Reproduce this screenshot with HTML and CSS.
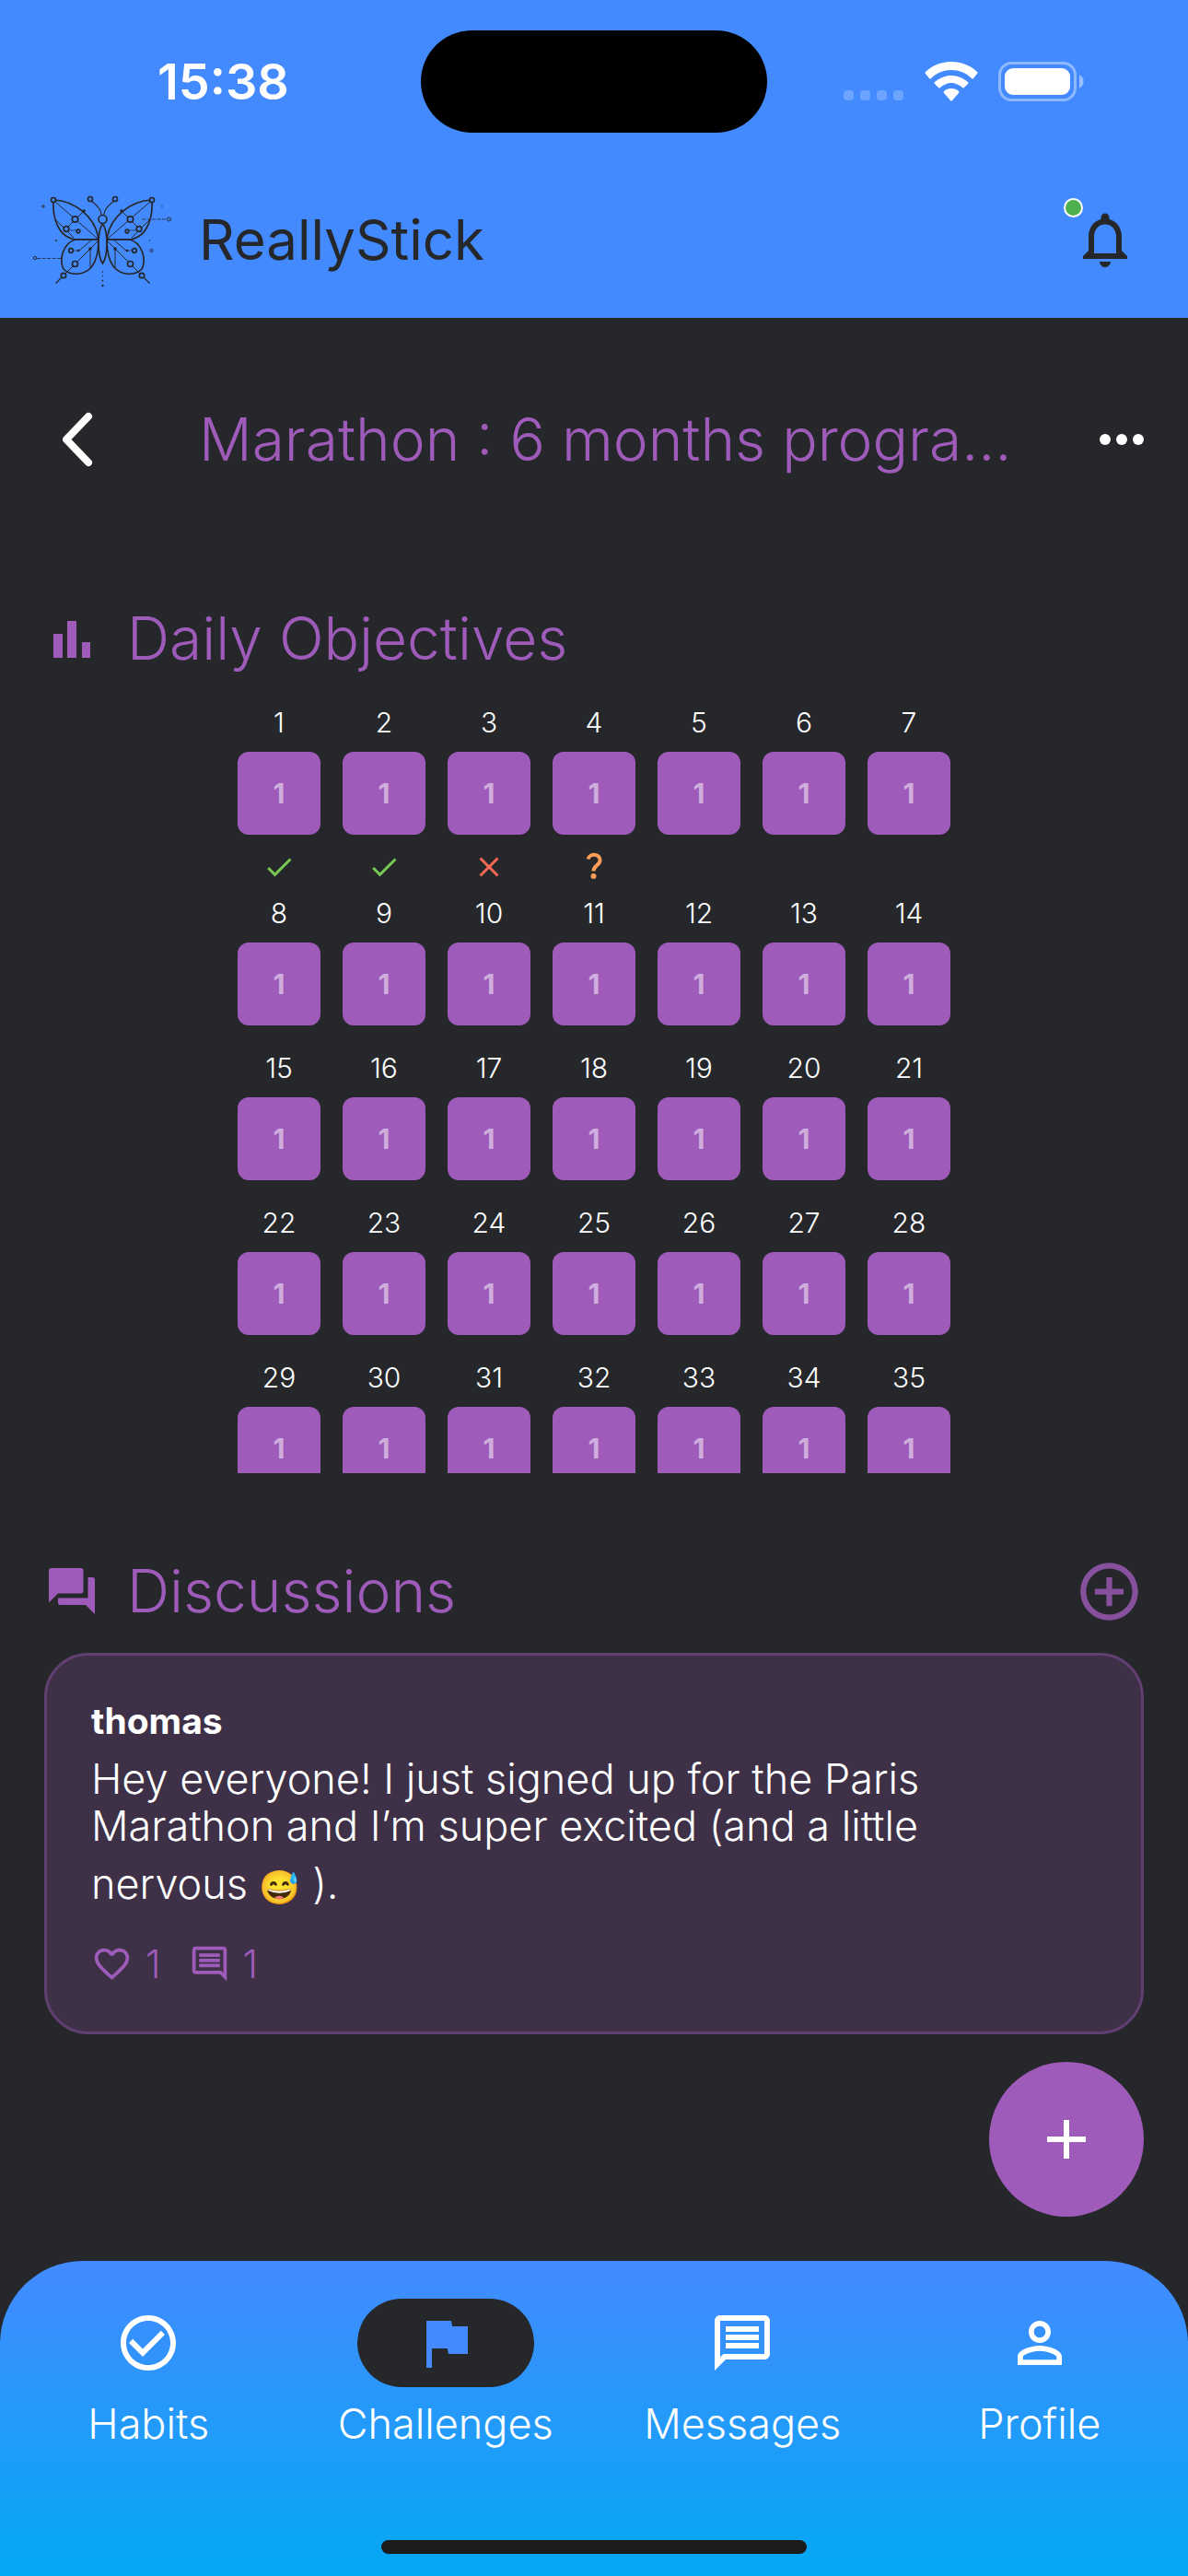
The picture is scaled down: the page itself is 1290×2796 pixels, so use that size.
FILE: index.html
```html
<!DOCTYPE html>
<html lang="en">
<head>
<meta charset="utf-8">
<meta name="viewport" content="width=device-width, initial-scale=1">
<title>ReallyStick</title>
<link rel="stylesheet" href="styles.css">
</head>
<body>
<header class="top">
  <div class="status">
    <time class="clock">15:38</time>
    <div class="island"></div>
    <div class="signals">
      <svg width="66" height="44" viewBox="0 0 66 44" fill="#fff" opacity=".22"><rect y="31" width="11" height="11" rx="4"/><rect x="18" y="31" width="11" height="11" rx="4"/><rect x="36" y="31" width="11" height="11" rx="4"/><rect x="54" y="31" width="11" height="11" rx="4"/></svg>
      <svg width="58" height="44" viewBox="0 0 58 44" fill="#fff"><path d="M29 0C40 0 50 4 57 11q1 1 0 2l-4 5q-1 1-2 0C45 12 37 9 29 9S13 12 7 18q-1 1-2 0l-4-5q-1-1 0-2C8 4 18 0 29 0z"/><path d="M29 15c7 0 13 3 18 7q1 1 0 2l-4 4q-1 1-2 0c-3-3-8-5-12-5s-9 2-12 5q-1 1-2 0l-4-4q-1-1 0-2c5-4 11-7 18-7z"/><path d="M29 29c3 0 6 1 8 3q1 1 0 2l-7 8q-1 1-2 0l-7-8q-1-1 0-2c2-2 5-3 8-3z"/></svg>
      <svg width="94" height="44" viewBox="0 0 94 44"><rect x="1.5" y="1.5" width="82" height="40" rx="13" fill="none" stroke="#fff" stroke-opacity=".4" stroke-width="3"/><rect x="7" y="7" width="71" height="29" rx="9" fill="#fff"/><path d="M88 14c6 3 6 12 0 15z" fill="#fff" opacity=".45"/></svg>
    </div>
  </div>
  <div class="appbar">
    <svg class="logo" viewBox="0 0 180 140" fill="none" stroke="#25272b" stroke-width="1.7">
      <g id="wing">
        <path d="M38 27C62 28 84 46 87 70H62C42 67 37 45 38 27z"/>
        <path d="M87 70H62C48 74 44 92 49 102c8 8 23 7 31-3 5-7 7-17 7-29z"/>
        <path d="M40 29 86 69 M71 39 52 58 M41 49 60 68 M86 72 49 109 M78 80v20 M80 70 66 82" stroke-width="1"/>
        <path d="M54 60h9M57 82h8" stroke-width=".7"/>
        <g fill="#448aff"><circle cx="38" cy="27" r="2.5"/><circle cx="61.500" cy="48" r="3.2"/><circle cx="52" cy="58.5" r="2.8"/><circle cx="65" cy="61" r="1.8"/><circle cx="57" cy="82" r="2.3"/><circle cx="61.5" cy="96.5" r="3"/><circle cx="49" cy="109" r="2.7"/><circle cx="78" cy="26" r="2.5"/></g>
        <path d="M79 28C86 33 90 38 90 43M47 111l-6 6" stroke-width="1.2"/>
        <g fill="#25272b" stroke="none"><circle cx="71" cy="39" r="1.8"/><circle cx="78" cy="80" r="1.8"/><circle cx="65" cy="82" r="1.3"/><circle cx="41" cy="117" r=".8"/></g>
      </g>
      <use href="#wing" transform="matrix(-1 0 0 1 183 0)"/>
      <path d="M91.5 53c-6 8-6 34 0 43 6-9 6-35 0-43z" fill="#448aff"/>
      <circle cx="91.5" cy="48" r="4.5" fill="#448aff"/>
      <path d="M20 90.500h26M134 48h27" stroke-width=".8" stroke-dasharray="4 1.5"/>
      <g stroke-width="1"><circle cx="18" cy="90" r="1.7"/><circle cx="163.500" cy="48" r="2"/><circle cx="144.500" cy="82" r="1.6"/><circle cx="27" cy="34" r="1.2"/></g>
      <g fill="#25272b" stroke="none"><circle cx="41" cy="71" r="1"/><circle cx="142.5" cy="71" r=".7"/><circle cx="156" cy="34" r=".7"/><circle cx="91.5" cy="105" r=".8"/><circle cx="91.5" cy="109.5" r=".8"/><circle cx="91.5" cy="114.5" r=".9"/><circle cx="91.5" cy="120" r="1.2"/></g>
    </svg>
    <span class="brand">ReallyStick</span>
    <button class="bell" aria-label="Notifications">
      <svg class="icon-l" viewBox="0 0 24 24"><path d="M12 22c1.1 0 2-.9 2-2h-4c0 1.1.89 2 2 2zm6-6v-5c0-3.07-1.64-5.64-4.5-6.32V4c0-.83-.67-1.5-1.5-1.5s-1.5.67-1.5 1.5v.68C7.63 5.36 6 7.92 6 11v5l-2 2v1h16v-1l-2-2zm-2 1H8v-6c0-2.48 1.51-4.5 4-4.5s4 2.02 4 4.5v6z"/></svg>
      <span class="badge"></span>
    </button>
  </div>
</header>

<main class="content">
  <div class="titlebar">
    <button class="back" aria-label="Back"><svg width="36" height="60" viewBox="0 0 36 60" fill="none" stroke="#fff" stroke-width="8" stroke-linecap="round" stroke-linejoin="round"><path d="M30 5 6 30l24 25"/></svg></button>
    <h1 class="heading title">Marathon : 6 months progra…</h1>
    <button class="more" aria-label="More"><svg width="48" height="14" viewBox="0 0 48 14" fill="#fff"><circle cx="6" cy="7" r="6"/><circle cx="24" cy="7" r="6"/><circle cx="42" cy="7" r="6"/></svg></button>
  </div>

  <section class="objectives">
    <div class="section-head">
      <svg class="icon-m" viewBox="0 0 60 60"><path d="M10 25h10v26H10zM25 11h10v40H25zM41 34h9v17h-9z"/></svg>
      <h2 class="heading">Daily Objectives</h2>
    </div>
    <ol class="days">
      <li class="day">1<span class="goal">1</span><svg class="mark done" viewBox="0 0 24 24"><path d="M9 16.17 4.83 12l-1.42 1.41L9 19 21 7l-1.41-1.41z"/></svg></li>
      <li class="day">2<span class="goal">1</span><svg class="mark done" viewBox="0 0 24 24"><path d="M9 16.17 4.83 12l-1.42 1.41L9 19 21 7l-1.41-1.41z"/></svg></li>
      <li class="day">3<span class="goal">1</span><svg class="mark missed" viewBox="0 0 24 24"><path d="M19 6.41 17.59 5 12 10.59 6.41 5 5 6.41 10.59 12 5 17.59 6.41 19 12 13.41 17.59 19 19 17.59 13.41 12z"/></svg></li>
      <li class="day">4<span class="goal">1</span><svg class="mark open" viewBox="0 0 36 36"><path d="M11.500 9.500c2-7 14-6 13 2-1 5-7 5-7 11" fill="none" stroke="#ff9d57" stroke-width="4"/><circle cx="17.5" cy="28" r="3"/></svg></li>
      <li class="day">5<span class="goal">1</span></li>
      <li class="day">6<span class="goal">1</span></li>
      <li class="day">7<span class="goal">1</span></li>
      <li class="day">8<span class="goal">1</span></li>
      <li class="day">9<span class="goal">1</span></li>
      <li class="day">10<span class="goal">1</span></li>
      <li class="day">11<span class="goal">1</span></li>
      <li class="day">12<span class="goal">1</span></li>
      <li class="day">13<span class="goal">1</span></li>
      <li class="day">14<span class="goal">1</span></li>
      <li class="day">15<span class="goal">1</span></li>
      <li class="day">16<span class="goal">1</span></li>
      <li class="day">17<span class="goal">1</span></li>
      <li class="day">18<span class="goal">1</span></li>
      <li class="day">19<span class="goal">1</span></li>
      <li class="day">20<span class="goal">1</span></li>
      <li class="day">21<span class="goal">1</span></li>
      <li class="day">22<span class="goal">1</span></li>
      <li class="day">23<span class="goal">1</span></li>
      <li class="day">24<span class="goal">1</span></li>
      <li class="day">25<span class="goal">1</span></li>
      <li class="day">26<span class="goal">1</span></li>
      <li class="day">27<span class="goal">1</span></li>
      <li class="day">28<span class="goal">1</span></li>
      <li class="day">29<span class="goal">1</span></li>
      <li class="day">30<span class="goal">1</span></li>
      <li class="day">31<span class="goal">1</span></li>
      <li class="day">32<span class="goal">1</span></li>
      <li class="day">33<span class="goal">1</span></li>
      <li class="day">34<span class="goal">1</span></li>
      <li class="day">35<span class="goal">1</span></li>
    </ol>
  </section>

  <section class="discussions">
    <div class="section-head">
      <svg class="icon-m" viewBox="0 0 24 24"><path d="M21 6h-2v9H6v2c0 .55.45 1 1 1h11l4 4V7c0-.55-.45-1-1-1zm-4 6V3c0-.55-.45-1-1-1H3c-.55 0-1 .45-1 1v14l4-4h10c.55 0 1-.45 1-1z"/></svg>
      <h2 class="heading">Discussions</h2>
      <button class="add" aria-label="New discussion"><svg class="icon-xl" viewBox="0 0 24 24"><path d="M13 7h-2v4H7v2h4v4h2v-4h4v-2h-4V7zm-1-5C6.48 2 2 6.48 2 12s4.48 10 10 10 10-4.48 10-10S17.52 2 12 2zm0 18c-4.41 0-8-3.59-8-8s3.59-8 8-8 8 3.59 8 8-3.59 8-8 8z"/></svg></button>
    </div>
    <article class="card">
      <h3 class="author">thomas</h3>
      <p class="message">Hey everyone! I just signed up for the Paris<br>Marathon and I’m super excited (and a little</p>
      <p class="message last">nervous <span class="emoji">😅</span> ).</p>
      <div class="reactions">
        <button class="reaction" aria-label="Likes"><svg class="icon-s" viewBox="0 0 24 24"><path d="M16.5 3c-1.74 0-3.41.81-4.5 2.09C10.91 3.81 9.24 3 7.5 3 4.42 3 2 5.42 2 8.5c0 3.78 3.4 6.86 8.55 11.54L12 21.35l1.45-1.32C18.6 15.36 22 12.28 22 8.5 22 5.42 19.58 3 16.5 3zm-4.4 15.55l-.1.1-.1-.1C7.14 14.24 4 11.39 4 8.5 4 6.5 5.5 5 7.5 5c1.54 0 3.04.99 3.57 2.36h1.87C13.46 5.99 14.96 5 16.5 5c2 0 3.5 1.5 3.5 3.5 0 2.89-3.14 5.74-7.9 10.05z"/></svg>1</button>
        <button class="reaction" aria-label="Comments"><svg class="icon-s" viewBox="0 0 24 24"><path d="M20 2H4c-1.1 0-2 .9-2 2v12c0 1.1.9 2 2 2h14l4 4V4c0-1.1-.9-2-2-2zm0 15.17L18.83 16H4V4h16v13.17zM6 12h12v2H6zm0-3h12v2H6zm0-3h12v2H6z"/></svg>1</button>
      </div>
    </article>
  </section>
  <button class="fab" aria-label="Add"><svg class="icon-l" viewBox="0 0 24 24"><path d="M19 13h-6v6h-2v-6H5v-2h6V5h2v6h6z"/></svg></button>
</main>

<nav class="tabs">
  <a class="tab" href="#habits"><span class="pill"><svg class="icon-l" viewBox="0 0 24 24"><path d="M16.59 7.58 10 14.17l-3.59-3.58L5 12l5 5 8-8zM12 2C6.48 2 2 6.48 2 12s4.48 10 10 10 10-4.48 10-10S17.52 2 12 2zm0 18c-4.42 0-8-3.58-8-8s3.58-8 8-8 8 3.58 8 8-3.58 8-8 8z"/></svg></span>Habits</a>
  <a class="tab" href="#challenges" aria-current="page"><span class="pill"><svg class="icon-l" viewBox="0 0 24 24"><path d="M14.4 6 14 4H5v17h2v-7h5.6l.4 2h7V6z"/></svg></span>Challenges</a>
  <a class="tab" href="#messages"><span class="pill"><svg class="icon-l" viewBox="0 0 24 24"><path d="M4 4h16v12H5.17L4 17.17V4m0-2c-1.1 0-1.99.9-1.99 2L2 22l4-4h14c1.1 0 2-.9 2-2V4c0-1.1-.9-2-2-2H4zm2 10h12v2H6v-2zm0-3h12v2H6V9zm0-3h12v2H6V6z"/></svg></span>Messages</a>
  <a class="tab" href="#profile"><span class="pill"><svg class="icon-l" viewBox="0 0 24 24"><path d="M12 5.9c1.16 0 2.1.94 2.1 2.1s-.94 2.1-2.1 2.1S9.9 9.16 9.9 8s.94-2.1 2.1-2.1m0 9c2.97 0 6.1 1.46 6.1 2.1v1.1H5.9V17c0-.64 3.13-2.1 6.1-2.1M12 4C9.79 4 8 5.79 8 8s1.79 4 4 4 4-1.79 4-4-1.79-4-4-4zm0 9c-2.67 0-8 1.34-8 4v3h16v-3c0-2.66-5.33-4-8-4z"/></svg></span>Profile</a>
  <div class="home"></div>
</nav>
</body>
</html>
```
FILE: styles.css
```css
* { box-sizing: border-box; }

body {
  margin: 0;
  min-height: 100vh;
  display: flex;
  flex-direction: column;
  background: #25272b;
  color: #fff;
  font-family: Inter, "Liberation Sans", sans-serif;
  font-weight: 300;
}

h1, h2, h3, p, ol { margin: 0; padding: 0; font-weight: inherit; }

button {
  display: flex;
  align-items: center;
  padding: 0;
  border: 0;
  background: none;
  color: inherit;
  font: inherit;
}

svg { display: block; flex: none; }

.icon-xl { width: 75px; height: 75px; fill: currentColor; }
.icon-l { width: 72px; height: 72px; fill: currentColor; }
.icon-m { width: 60px; height: 60px; fill: currentColor; }
.icon-s { width: 45px; height: 45px; fill: currentColor; }

/* Header */
.top { background: #448aff; }

.status {
  display: grid;
  grid-template-columns: 1fr 376px 1fr;
  padding-top: 33px;
}

.clock {
  padding-left: 171px;
  font-size: 54px;
  line-height: 111px;
  font-weight: 600;
}

.island { border-radius: 56px; background: #000; }

.signals {
  display: flex;
  align-items: center;
  justify-content: flex-end;
  gap: 22px;
  padding-right: 112px;
}

.appbar {
  display: flex;
  align-items: center;
  padding: 46px 54px 15px 20px;
}

.logo { width: 180px; height: 140px; margin-right: 16px; }

.brand { color: #25272b; font-size: 60px; font-weight: 400; }

.bell { position: relative; margin-left: auto; color: #25272b; }

.badge {
  position: absolute;
  top: -9px;
  left: -9px;
  width: 21px;
  height: 21px;
  border: 2px solid #fff;
  border-radius: 50%;
  background: #4caf50;
}

/* Page body */
.content {
  position: relative;
  flex: 1;
  padding: 87px 48px 48px;
}

.heading { color: #9f5bb9; font-size: 64px; line-height: 90px; }

.titlebar { display: flex; align-items: center; }
.back { width: 168px; padding-left: 18px; }
.title { white-space: nowrap; }
.more { margin-left: auto; }

.objectives { margin-top: 126px; }

.section-head {
  display: flex;
  align-items: center;
  gap: 30px;
  color: #9f5bb9;
}

.days {
  display: grid;
  grid-template-columns: repeat(7, 90px);
  justify-content: center;
  gap: 14px 24px;
  max-height: 833px;
  margin-top: 28px;
  overflow: hidden;
  list-style: none;
}

.day {
  display: flex;
  flex-direction: column;
  align-items: center;
  font-size: 30px;
  line-height: 36px;
}

.goal {
  width: 90px;
  margin: 14px 0;
  border-radius: 12px;
  background: #9f5bb9;
  color: #cfaddc;
  font-weight: 700;
  line-height: 90px;
  text-align: center;
}

.mark { width: 36px; height: 36px; margin-top: 3px; }
.done { fill: #79c753; }
.missed { fill: #f96854; }
.open { fill: #ff9d57; }

.discussions { margin-top: 83px; }
.add { margin-left: auto; opacity: .8; }

.card {
  margin-top: 22px;
  padding: 48px;
  border: 3px solid #613f70;
  border-radius: 48px;
  background: #3d3047;
}

.author { font-size: 39px; line-height: 45px; font-weight: 700; }
.message { margin-top: 15px; font-size: 45px; line-height: 51px; }
.last { margin-top: 6px; line-height: 63px; }
.emoji { font-family: "Noto Color Emoji", sans-serif; font-size: 36px; line-height: 1; }

.reactions {
  display: flex;
  gap: 30px;
  margin-top: 30px;
  color: #9f5bb9;
  font-size: 42px;
  line-height: 51px;
}

.reaction { gap: 14px; }

.fab {
  position: absolute;
  right: 48px;
  bottom: 48px;
  width: 168px;
  height: 168px;
  justify-content: center;
  border-radius: 50%;
  background: #9f5bb9;
}

/* Bottom navigation */
.tabs {
  display: grid;
  grid-template-columns: repeat(4, 1fr);
  padding: 41px 0 24px;
  border-radius: 90px 90px 0 0;
  background: linear-gradient(#448aff, #03a9f4);
}

.tab {
  display: flex;
  flex-direction: column;
  align-items: center;
  gap: 14px;
  color: #fff;
  font-size: 45px;
  line-height: 51px;
  text-decoration: none;
}

.pill {
  display: flex;
  align-items: center;
  justify-content: center;
  width: 192px;
  height: 96px;
  border-radius: 48px;
}

.tab[aria-current] .pill { background: #25272b; color: #448aff; }

.home {
  grid-column: 1 / -1;
  justify-self: center;
  width: 462px;
  height: 15px;
  margin-top: 101px;
  border-radius: 8px;
  background: #1c1c1c;
}
```
